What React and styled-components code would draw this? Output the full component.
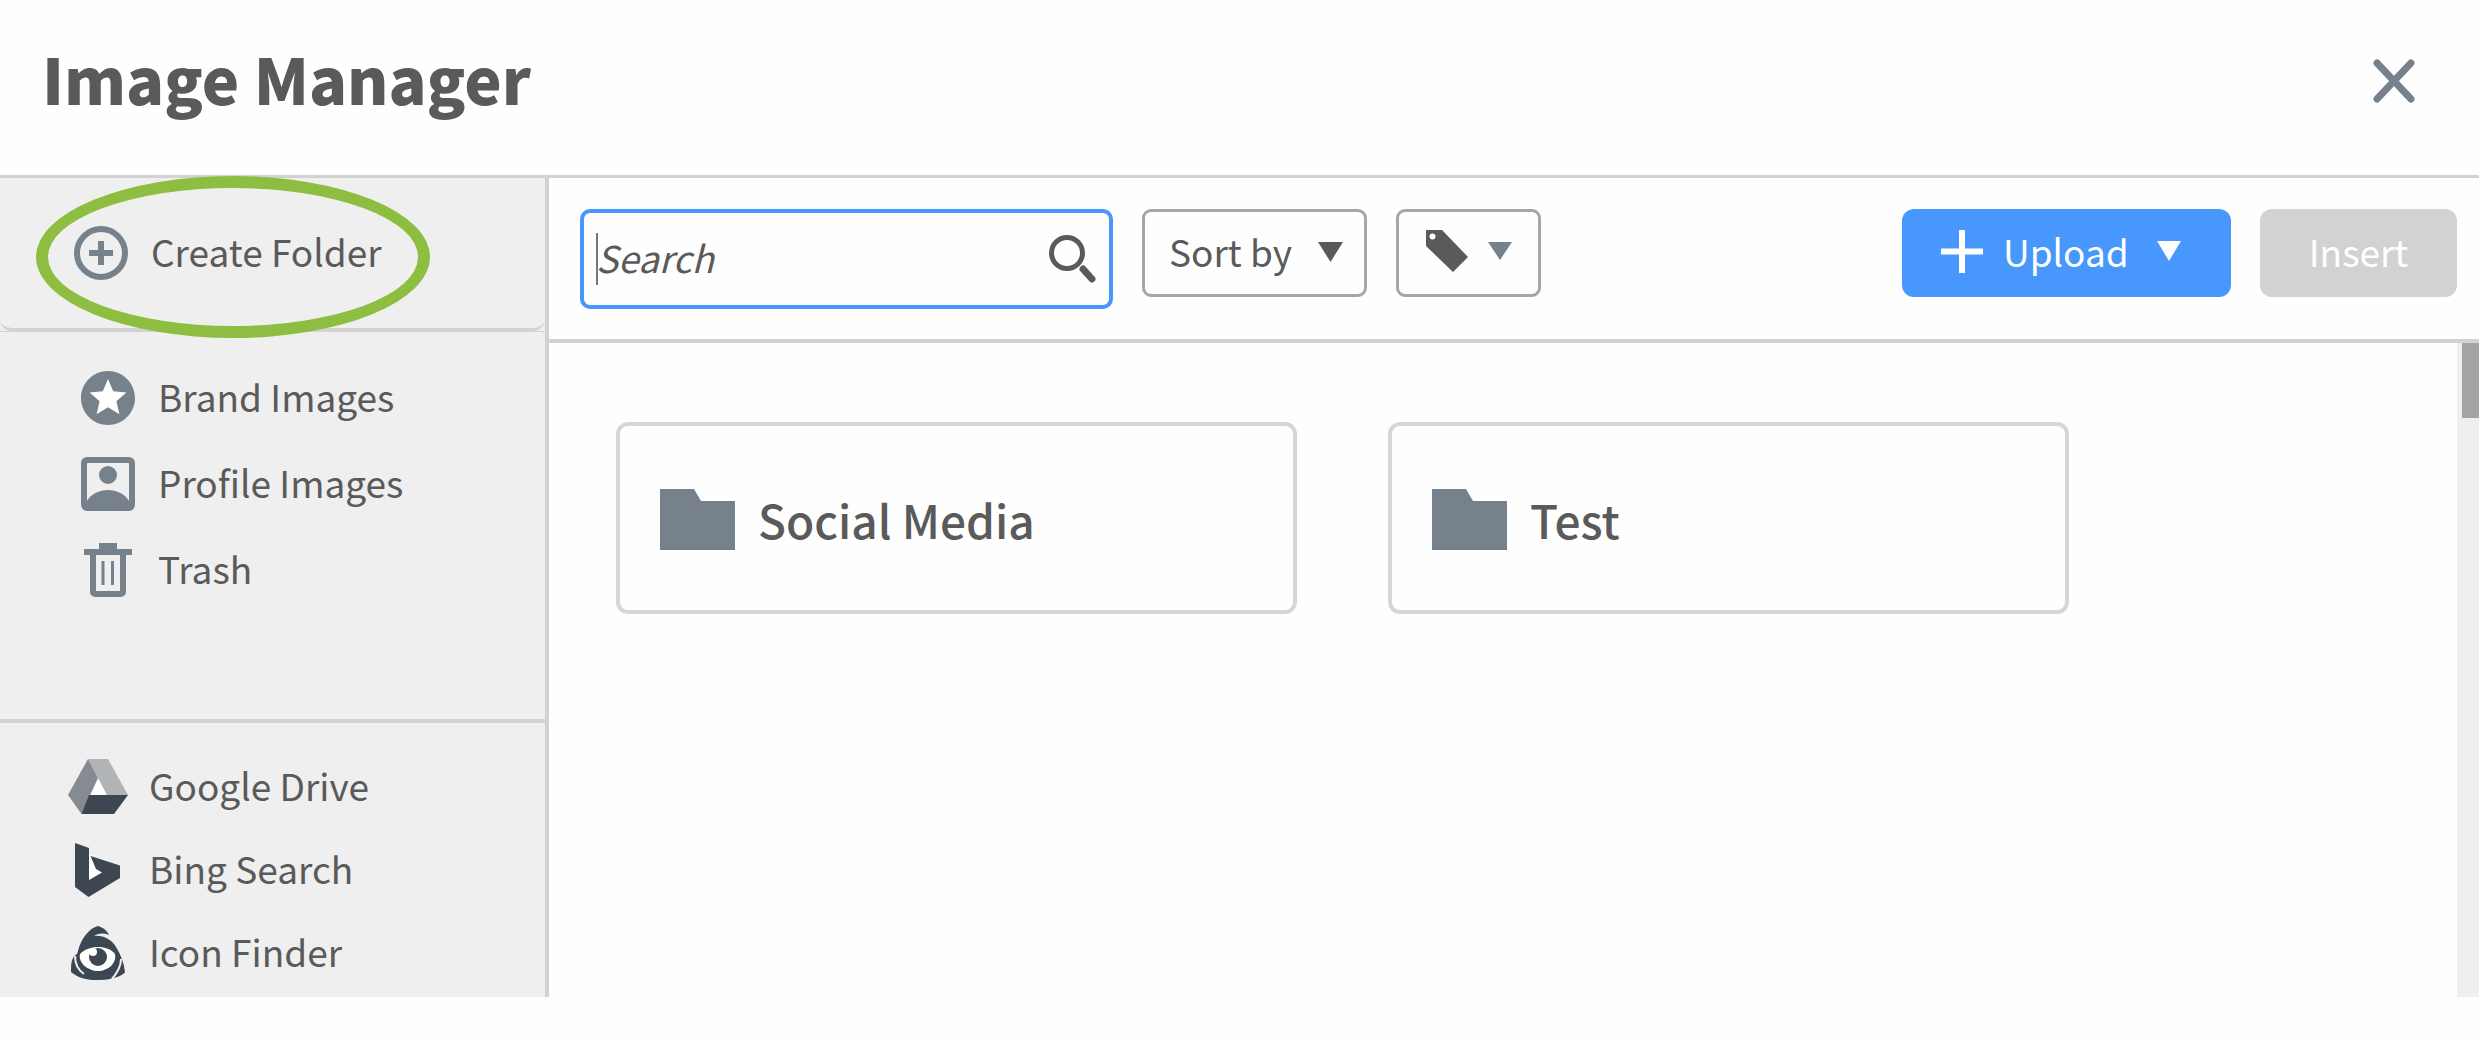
import React from "react";
import styled, { createGlobalStyle } from "styled-components";

const ink = "#5a5a5a";
const slate = "#77818b";
const navy = "#3d4751";
const line = "#d2d2d2";
const blue = "#4797fd";
const panel = "#efefef";

const GlobalStyle = createGlobalStyle`
  *, *::before, *::after { box-sizing: border-box; }
  body { margin: 0; background: #fefefe; }
  body, button, input, select {
    font-family: "Noto Sans CJK SC", "Noto Sans", sans-serif;
    color: ${ink};
  }
`;

const Header = styled.header`
  display: flex;
  align-items: center;
  justify-content: space-between;
  padding: 0 64px 16px 42px;
  height: 178px;
  border-bottom: 3px solid ${line};
`;

const Title = styled.h1`
  margin: 0;
  padding-bottom: 4px;
  font-size: 63px;
  line-height: 96px;
  font-weight: 900;
`;

const CloseButton = styled.button`
  display: flex;
  padding: 2px 0 0;
  border: 0;
  background: none;
`;

const Body = styled.div`
  display: flex;
`;

const Sidebar = styled.aside`
  flex: 0 0 549px;
  background: ${panel};
  border-right: 4px solid ${line};
`;

const CreateSection = styled.div`
  position: relative;
  border-bottom: 1px solid ${line};
`;

const CreateButton = styled.button`
  display: flex;
  align-items: center;
  gap: 23px;
  width: 100%;
  height: 153px;
  padding: 0 0 0 74px;
  border: 0;
  border-bottom: 3px solid ${line};
  border-radius: 0 0 12px 12px;
  background: none;
  font-size: 37px;
  line-height: 56px;
`;

const Highlight = styled.span`
  position: absolute;
  top: -2px;
  left: 36px;
  width: 394px;
  height: 162px;
  border: 12px solid #8dbe41;
  border-radius: 50%;
  pointer-events: none;
`;

const Nav = styled.nav`
  padding: ${(p) => (p.$sources ? "22px 0 3px 68px" : "23px 0 106px 81px")};
  border-top: ${(p) => (p.$sources ? `4px solid ${line}` : "0")};
`;

const NavLink = styled.a`
  display: flex;
  align-items: center;
  gap: ${(p) => (p.$source ? 21 : 23)}px;
  height: ${(p) => (p.$source ? 83 : 86)}px;
  font-size: 37px;
  line-height: 56px;
  color: ${ink};
  text-decoration: none;
`;

const Label = styled.span`
  padding-bottom: 4px;
`;

const IconSlot = styled.span`
  display: flex;
  justify-content: center;
  flex: 0 0 ${(p) => p.$width}px;
`;

const Main = styled.main`
  flex: 1;
  min-width: 0;
  display: flex;
  flex-direction: column;
`;

const Toolbar = styled.div`
  display: flex;
  align-items: flex-start;
  gap: 29px;
  padding: 31px 22px 30px 31px;
  border-bottom: 4px solid ${line};
`;

const SearchBox = styled.div`
  display: flex;
  align-items: center;
  width: 533px;
  height: 100px;
  padding: 0 12px;
  border: 4px solid ${blue};
  border-radius: 10px;
`;

const Caret = styled.span`
  width: 2px;
  height: 52px;
  margin-right: -2px;
  background: #777;
`;

const SearchInput = styled.input`
  flex: 1;
  min-width: 0;
  padding: 0 0 4px;
  border: 0;
  outline: 0;
  background: none;
  font-size: 37px;
  line-height: 56px;
  font-style: italic;
  &::placeholder { color: ${ink}; opacity: 1; }
`;

const SortField = styled.div`
  display: grid;
  align-items: center;
  & > * { grid-area: 1 / 1; }
  & > svg { justify-self: end; margin: 0 24px 2px 0; pointer-events: none; }
`;

const SortSelect = styled.select`
  appearance: none;
  width: 225px;
  height: 88px;
  padding: 0 0 4px 24px;
  border: 3px solid #a6a6a6;
  border-radius: 9px;
  background: none;
  font-size: 37px;
  line-height: 56px;
`;

const Button = styled.button`
  display: flex;
  align-items: center;
  justify-content: center;
  gap: ${(p) => p.$gap || 0}px;
  height: 88px;
  width: ${(p) => p.$width}px;
  padding: 0 0 4px;
  border: ${(p) => (p.$fill ? "0" : "3px solid #a6a6a6")};
  border-radius: ${(p) => (p.$fill ? 12 : 9)}px;
  background: ${(p) => p.$fill || "none"};
  color: #fff;
  font-size: 37px;
  line-height: 56px;
`;

const UploadButton = styled(Button)`
  justify-content: flex-start;
  padding-left: 39px;
  & > span { margin-right: 8px; }
`;

const Actions = styled.div`
  display: flex;
  gap: 29px;
  margin-left: auto;
`;

const Content = styled.div`
  flex: 1;
  display: flex;
`;

const FolderGrid = styled.div`
  flex: 1;
  display: grid;
  grid-template-columns: repeat(2, minmax(0, 681px));
  align-content: start;
  gap: 91px;
  padding: 79px 67px;
`;

const FolderCard = styled.button`
  display: flex;
  align-items: center;
  gap: 23px;
  height: 192px;
  padding: 2px 0 0 40px;
  border: 4px solid #d6d6d6;
  border-radius: 12px;
  background: none;
  font-size: 46px;
  line-height: 68px;
  font-weight: 500;
`;

const Track = styled.div`
  flex: 0 0 22px;
  padding-left: 5px;
  background: ${panel};
`;

const Thumb = styled.div`
  height: 75px;
  background: #a4a4a4;
`;

const Arrow = ({ color, width = 24, height = 18 }) => (
  <svg width={width} height={height} viewBox="0 0 26 20" preserveAspectRatio="none" aria-hidden="true">
    <path d="M0 0h26L13 20z" fill={color} />
  </svg>
);

const CloseIcon = () => (
  <svg width="42" height="44" viewBox="0 0 42 44" aria-hidden="true">
    <path d="M4 4l34 36M38 4L4 40" stroke={slate} strokeWidth="7" strokeLinecap="round" />
  </svg>
);

const PlusCircle = () => (
  <svg width="54" height="54" viewBox="0 0 54 54" fill="none" stroke={slate} aria-hidden="true">
    <circle cx="27" cy="27" r="24" strokeWidth="6" />
    <path d="M27 15v24M15 27h24" strokeWidth="6" />
  </svg>
);

const StarIcon = () => (
  <svg width="54" height="54" viewBox="2 2 20 20" aria-hidden="true">
    <circle cx="12" cy="12" r="9" fill="#fff" />
    <path
      fill={slate}
      d="M11.99 2C6.47 2 2 6.48 2 12s4.47 10 9.99 10C17.52 22 22 17.52 22 12S17.52 2 11.99 2zm4.24 16L12 15.45 7.77 18l1.12-4.81-3.73-3.23 4.92-.42L12 5l1.92 4.53 4.92.42-3.73 3.23L16.23 18z"
    />
  </svg>
);

const ProfileIcon = () => (
  <svg width="54" height="54" viewBox="0 0 54 54" fill={slate} aria-hidden="true">
    <path
      fillRule="evenodd"
      d="M6 0h42a6 6 0 0 1 6 6v42a6 6 0 0 1-6 6H6a6 6 0 0 1-6-6V6a6 6 0 0 1 6-6zM7 6a1 1 0 0 0-1 1v37c4-7 12-11 21-11s17 4 21 11V7a1 1 0 0 0-1-1z"
    />
    <circle cx="27" cy="18" r="9" />
  </svg>
);

const TrashIcon = () => (
  <svg width="48" height="54" viewBox="0 0 48 54" fill={slate} aria-hidden="true">
    <path d="M15 0h18v6h15v6H0V6h15z" />
    <path fillRule="evenodd" d="M6 11h36v38a5 5 0 0 1-5 5H11a5 5 0 0 1-5-5zM12 12v36h24V12z" />
    <path d="M17.500 18h3v24h-3zM27 18h3v24h-3z" />
  </svg>
);

const DriveIcon = () => (
  <svg width="60" height="55" viewBox="0 0 60 55" aria-hidden="true">
    <path d="M30 18L20 37h20z" fill="#fff" />
    <path d="M20 0h20l20 36H39z" fill="#b0b4b7" />
    <path d="M20 0l10 19-16.500 36L0 36z" fill="#868a92" />
    <path d="M21 36h39L46 55H13.500z" fill={navy} />
  </svg>
);

const BingIcon = () => (
  <svg width="46" height="54" viewBox="0 0 46 54" aria-hidden="true">
    <path d="M13 12h4l11 18-15 9z" fill="#fff" />
    <path d="M0 0l14 5v32l13-7.500-6-3.500-5.500-13L45 22.500V35L13.500 54 0 44z" fill={navy} />
  </svg>
);

const EyeIcon = () => (
  <svg width="54" height="54" viewBox="0 0 54 54" aria-hidden="true">
    <path
      fill={navy}
      d="M27 0c4 1 9 4 11 9-5-2-10-2-15 1 9-1 17 3 22 11 5 8 8 16 9 25 0 1-5 5-12 6-5 2-12 2-18 2-8 0-17-2-24-8 0-6 0-10 2-14 2-4 4-2 5-7C10 13 18 2 27 0z"
    />
    <path
      d="M4 30c0 8 3 14 9 18M50 33c0 7-3 13-9 20"
      fill="none"
      stroke={panel}
      strokeWidth="2"
    />
    <path fill="#fff" d="M9 28c5-5 11-7 18-7s13 2 17 7c2 9-7 17-17 17S7 37 9 28z" />
    <circle cx="27" cy="31" r="9" fill={navy} />
    <circle cx="22" cy="26" r="4" fill="#fff" />
  </svg>
);

const SearchIcon = () => (
  <svg width="48" height="48" viewBox="0 0 48 48" fill="none" stroke={ink} aria-hidden="true">
    <circle cx="18" cy="18" r="15.500" strokeWidth="5" />
    <path d="M34 34l9 10" strokeWidth="7" strokeLinecap="round" />
  </svg>
);

const TagIcon = () => (
  <svg width="42" height="42" viewBox="0 0 42 42" aria-hidden="true">
    <path
      fill={ink}
      fillRule="evenodd"
      d="M0 0h16l26 27-15 15L0 16zM6.500 3.500a3 3 0 1 0 0 6 3 3 0 0 0 0-6z"
    />
  </svg>
);

const PlusIcon = () => (
  <svg width="42" height="43" viewBox="0 0 42 43" aria-hidden="true">
    <path d="M21 0v43M0 21.500h42" stroke="#fff" strokeWidth="6" />
  </svg>
);

const FolderIcon = () => (
  <svg width="75" height="61" viewBox="0 0 75 61" aria-hidden="true">
    <path d="M0 0h34l7 12h34v49H0z" fill={slate} />
  </svg>
);

const library = [
  ["Brand Images", StarIcon],
  ["Profile Images", ProfileIcon],
  ["Trash", TrashIcon],
];

const sources = [
  ["Google Drive", DriveIcon],
  ["Bing Search", BingIcon],
  ["Icon Finder", EyeIcon],
];

const folders = ["Social Media", "Test"];

export default function App() {
  return (
    <>
      <GlobalStyle />
      <Header>
        <Title>Image Manager</Title>
        <CloseButton aria-label="Close">
          <CloseIcon />
        </CloseButton>
      </Header>
      <Body>
        <Sidebar>
          <CreateSection>
            <CreateButton>
              <PlusCircle />
              <Label>Create Folder</Label>
            </CreateButton>
            <Highlight />
          </CreateSection>
          <Nav aria-label="Library">
            {library.map(([label, Icon]) => (
              <NavLink href="#" key={label}>
                <IconSlot $width={54}>
                  <Icon />
                </IconSlot>
                <Label>{label}</Label>
              </NavLink>
            ))}
          </Nav>
          <Nav $sources aria-label="Sources">
            {sources.map(([label, Icon]) => (
              <NavLink href="#" key={label} $source>
                <IconSlot $width={60}>
                  <Icon />
                </IconSlot>
                <Label>{label}</Label>
              </NavLink>
            ))}
          </Nav>
        </Sidebar>
        <Main>
          <Toolbar>
            <SearchBox>
              <Caret />
              <SearchInput type="text" placeholder="Search" aria-label="Search" />
              <SearchIcon />
            </SearchBox>
            <SortField>
              <SortSelect aria-label="Sort by">
                <option>Sort by</option>
              </SortSelect>
              <Arrow color={ink} width={25} height={20} />
            </SortField>
            <Button $width={145} $gap={20} aria-label="Filter by tag">
              <TagIcon />
              <Arrow color={slate} />
            </Button>
            <Actions>
              <UploadButton $fill={blue} $width={329} $gap={20}>
                <PlusIcon />
                <span>Upload</span>
                <Arrow color="#fff" height={20} />
              </UploadButton>
              <Button $fill={line} $width={197}>
                Insert
              </Button>
            </Actions>
          </Toolbar>
          <Content>
            <FolderGrid>
              {folders.map((name) => (
                <FolderCard key={name}>
                  <FolderIcon />
                  {name}
                </FolderCard>
              ))}
            </FolderGrid>
            <Track>
              <Thumb />
            </Track>
          </Content>
        </Main>
      </Body>
    </>
  );
}
